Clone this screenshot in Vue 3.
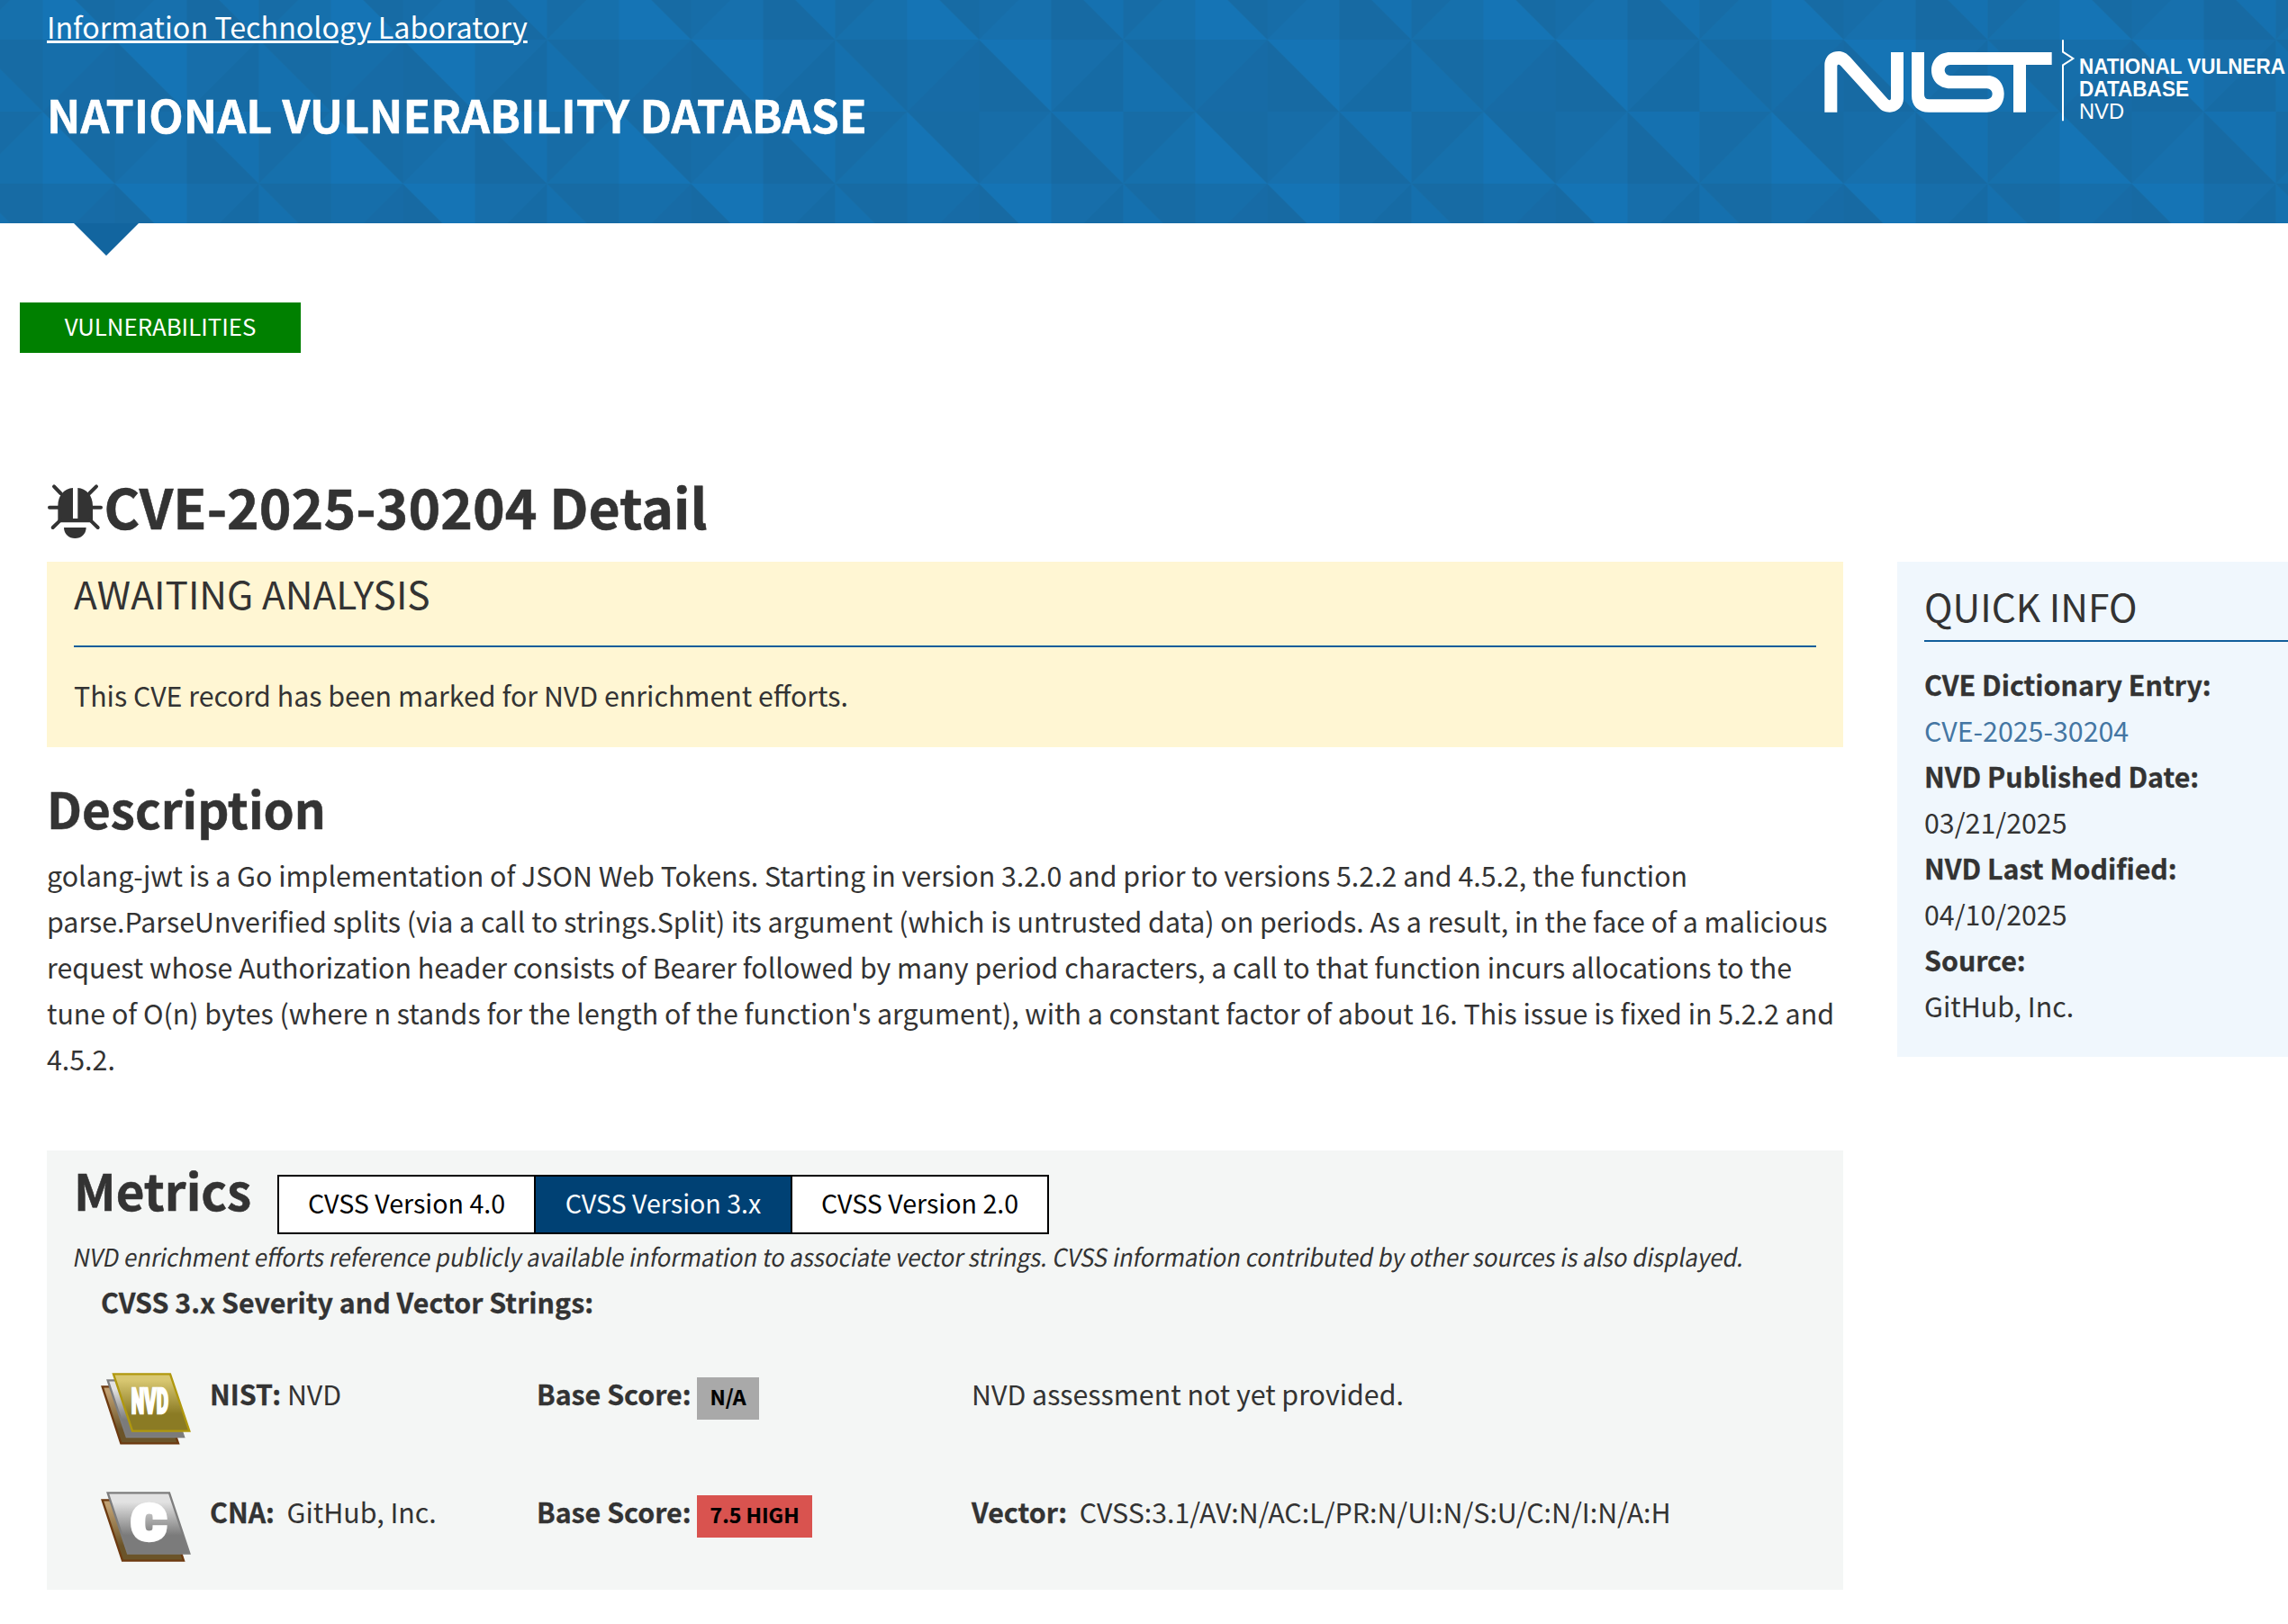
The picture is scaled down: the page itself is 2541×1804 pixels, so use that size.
<script setup>
const facts = [
  { label: 'CVE Dictionary Entry:', value: 'CVE-2025-30204', link: true },
  { label: 'NVD Published Date:', value: '03/21/2025' },
  { label: 'NVD Last Modified:', value: '04/10/2025' },
  { label: 'Source:', value: 'GitHub, Inc.' },
]
const versions = ['CVSS Version 4.0', 'CVSS Version 3.x', 'CVSS Version 2.0']
</script>

<template>
  <div class="page">
    <header class="banner">
      <svg class="facets" width="2541" height="248" aria-hidden="true">
        <defs>
          <pattern id="facet" x="47.5" y="-36" width="320" height="160" patternUnits="userSpaceOnUse">
            <rect width="320" height="160" fill="#176fab" />
            <path d="M0 0V80H80Z" fill="#1574b5" />
            <path d="M0 0H80V80Z" fill="#176ba4" />
            <path d="M80 0H160L80 80Z" fill="#176da8" />
            <path d="M160 0V80H80Z" fill="#1770ad" />
            <path d="M160 0V80H240Z" fill="#176aa3" />
            <path d="M160 0H240V80Z" fill="#1571b0" />
            <path d="M240 0H320L240 80Z" fill="#176ca6" />
            <path d="M320 0V80H240Z" fill="#1670ac" />
            <path d="M0 80H80L0 160Z" fill="#166eaa" />
            <path d="M80 80V160H0Z" fill="#176ba6" />
            <path d="M80 80V160H160Z" fill="#176aa3" />
            <path d="M80 80H160V160Z" fill="#1574b5" />
            <path d="M160 80H240L160 160Z" fill="#176eaa" />
            <path d="M240 80V160H160Z" fill="#166ba5" />
            <path d="M240 80V160H320Z" fill="#1570ae" />
            <path d="M240 80H320V160Z" fill="#176ba4" />
          </pattern>
        </defs>
        <rect width="2541" height="248" fill="url(#facet)" />
      </svg>
      <div class="titles">
        <a class="itl">Information Technology Laboratory</a>
        <div class="site">NATIONAL VULNERABILITY DATABASE</div>
      </div>
      <svg class="nist" viewBox="2020 0 521 248" width="521" height="248">
        <g transform="translate(2020 40) scale(.33333)" fill="#fff">
          <path d="M19 254V97C19 70 38 51 65 51C82 51 93 58 104 70L230 211C236 216 240 213 240 208V54H282V208C282 235 262 254 236 254C219 254 208 248 198 237L72 98C66 93 61 96 61 100V254Z" />
          <path d="M309 54H351V195Q351 211 367 211H560A18 18 0 0 0 560 175H437C400 175 375 148 375 115C375 80 400 54 437 54H776V96H690V254H648V96H437A18 18 0 0 0 437 132H563C596 132 617 160 617 193C617 228 596 254 560 254H367C330 254 309 232 309 197Z" />
          <path d="M813 13V53L847 75L813 97V283" fill="none" stroke="#fff" stroke-width="6" />
        </g>
        <g class="mark">
          <text x="2309" y="82.3" textLength="229" lengthAdjust="spacingAndGlyphs">NATIONAL VULNERA</text>
          <text x="2309" y="107" textLength="122" lengthAdjust="spacingAndGlyphs">DATABASE</text>
          <text class="light" x="2309" y="131.7" textLength="50" lengthAdjust="spacingAndGlyphs">NVD</text>
        </g>
      </svg>
    </header>
    <div class="pointer"></div>
    <a class="section-tag">VULNERABILITIES</a>

    <h2 class="cve">
      <svg class="bug" viewBox="24 0 187.5 228" width="62.5" height="76" fill="#333">
        <path d="M61 150V96C61 60 82 38 111 36V138H127V36C155 38 177 60 177 96V150L166 151H72Z" />
        <path d="M81 168H155C155 190 138 204 118 204S81 190 81 168Z" />
        <path d="M48 31L70 54M189 31L166 54M33 101H64M174 101H204M44 168L70 143M194 168L168 143" stroke="#333" stroke-width="12" stroke-linecap="round" />
      </svg>
      <span>CVE-2025-30204 Detail</span>
    </h2>

    <div class="columns">
      <main class="main">
        <section class="status">
          <h3>AWAITING ANALYSIS</h3>
          <p>This CVE record has been marked for NVD enrichment efforts.</p>
        </section>
        <h3 class="heading">Description</h3>
        <p class="description">golang-jwt is a Go implementation of JSON Web Tokens. Starting in version 3.2.0 and prior to versions 5.2.2 and 4.5.2, the function parse.ParseUnverified splits (via a call to strings.Split) its argument (which is untrusted data) on periods. As a result, in the face of a malicious request whose Authorization header consists of Bearer followed by many period characters, a call to that function incurs allocations to the tune of O(n) bytes (where n stands for the length of the function's argument), with a constant factor of about 16. This issue is fixed in 5.2.2 and 4.5.2.</p>

        <section class="metrics">
          <div class="metrics-head">
            <h3>Metrics</h3>
            <div class="tabs">
              <button v-for="(v, i) in versions" :key="v" :class="{ on: i === 1 }">{{ v }}</button>
            </div>
          </div>
          <p class="note"><span>NVD enrichment efforts reference publicly available information to associate vector strings. CVSS information contributed by other sources is also displayed.</span></p>
          <p class="sub">CVSS 3.x Severity and Vector Strings:</p>

          <div class="row">
            <div class="icon">
              <svg viewBox="66 75 300 240" width="100" height="80">
                <defs>
                  <linearGradient id="gold" x1="0" y1="0" x2="0" y2="1"><stop offset=".1" stop-color="#d9c872" /><stop offset=".7" stop-color="#8b7b24" /></linearGradient>
                  <linearGradient id="silver" x1="0" y1="0" x2="0" y2="1"><stop offset=".15" stop-color="#e2e2e2" /><stop offset=".7" stop-color="#7b7b7b" /></linearGradient>
                  <linearGradient id="bronze" x1="0" y1="0" x2="0" y2="1"><stop offset=".1" stop-color="#c0a071" /><stop offset=".75" stop-color="#6b5429" /></linearGradient>
                </defs>
                <path d="M71 121H259L324 310H133Z" fill="url(#bronze)" stroke="#6d3a10" stroke-width="7" />
                <path d="M89 100H279L342 288H152Z" fill="url(#silver)" stroke="#7d7d7d" stroke-width="7" />
                <path d="M108 79H297L361 269H171Z" fill="url(#gold)" stroke="#b0980e" stroke-width="7" />
                <text class="glyph" x="167" y="210" font-size="114" stroke-width="7" textLength="124" lengthAdjust="spacingAndGlyphs">NVD</text>
              </svg>
            </div>
            <div class="source"><b>NIST:</b> NVD</div>
            <div class="score"><b>Base Score:</b><span class="badge na">N/A</span></div>
            <div>NVD assessment not yet provided.</div>
          </div>

          <div class="row">
            <div class="icon">
              <svg viewBox="66 471 300 234" width="100" height="78">
                <path d="M71 499H275L342 701H138Z" fill="url(#bronze)" stroke="#6d3a10" stroke-width="7" />
                <path d="M89 475H294L361 677H156Z" fill="url(#silver)" stroke="#7d7d7d" stroke-width="7" />
                <text class="glyph" x="169" y="631" font-size="159" stroke-width="17" textLength="113" lengthAdjust="spacingAndGlyphs">C</text>
              </svg>
            </div>
            <div class="source"><b>CNA:</b>&nbsp; GitHub, Inc.</div>
            <div class="score"><b>Base Score:</b><span class="badge high">7.5 HIGH</span></div>
            <div><b>Vector:</b>&nbsp; CVSS:3.1/AV:N/AC:L/PR:N/UI:N/S:U/C:N/I:N/A:H</div>
          </div>
        </section>
      </main>

      <aside class="quick">
        <h3>QUICK INFO</h3>
        <dl>
          <template v-for="f in facts" :key="f.label">
            <dt>{{ f.label }}</dt>
            <dd :class="{ link: f.link }">{{ f.value }}</dd>
          </template>
        </dl>
      </aside>
    </div>
  </div>
</template>

<style>
body { background: #fff; overflow: hidden; }
</style>

<style scoped>
.page {
  width: 2541px;
  height: 1804px;
  overflow: hidden;
  font-family: "Noto Sans CJK SC", "Noto Sans", sans-serif;
  font-size: 30.35px;
  line-height: 51px;
  color: #333;
}
h2, h3, p, dl, dd { margin: 0; }
b, dt { font-weight: 700; }
svg { display: block; flex: none; overflow: visible; }
.site, .cve, .heading, .metrics-head h3, .sub, b, dt, .badge { -webkit-text-stroke: .01em; }

.banner {
  position: relative;
  display: flex;
  height: 248px;
  padding-left: 52px;
  box-sizing: border-box;
  overflow: hidden;
  color: #fff;
}
.facets { position: absolute; left: 0; top: 0; }
.titles { position: relative; width: 1968px; flex: none; padding-top: 5px; }
.itl {
  display: block;
  font-size: 32.25px;
  line-height: 48px;
  text-decoration: underline;
  text-decoration-thickness: 3px;
  text-underline-offset: 2px;
}
.site { margin-top: 33px; font-size: 49.98px; line-height: 80px; font-weight: 700; }
.nist { position: relative; }
.mark { font: 700 23.6px "Liberation Sans", Arial, sans-serif; fill: #fff; }
.light { font-weight: 400; }

.pointer {
  width: 0;
  margin-left: 82px;
  border: 36px solid transparent;
  border-top-color: #12659f;
  border-bottom: 0;
}
.section-tag {
  display: block;
  width: 312px;
  height: 56px;
  margin: 52px 0 0 22px;
  background: #008000;
  color: #fff;
  font-size: 25.8px;
  line-height: 52px;
  text-align: center;
}

.cve {
  display: flex;
  height: 76px;
  margin: 138px 0 18px 52px;
  font-size: 60.65px;
  line-height: 64px;
  font-weight: 700;
}
.bug { margin-right: 1px; }

.columns { display: flex; gap: 60px; padding-left: 52px; }
.main { width: 1995px; flex: none; }
.status { height: 206px; padding: 0 30px; background: #fff6d3; }
.status h3 {
  height: 93px;
  font-size: 42.5px;
  line-height: 69px;
  font-weight: 400;
  border-bottom: 2px solid #115e9b;
}
.status p { padding-top: 28px; }
.heading { margin-top: 37px; font-size: 54.7px; line-height: 62px; font-weight: 700; }
.description { margin-top: 18px; }

.metrics { height: 488px; margin-top: 76px; padding: 0 30px; background: #f4f6f5; }
.metrics-head { display: flex; height: 93px; }
.metrics-head h3 { width: 226px; font-size: 54.7px; line-height: 88px; font-weight: 700; }
.tabs { display: flex; margin-top: 27px; }
.tabs button {
  width: 287px;
  height: 66px;
  padding: 0 0 5px;
  border: 2px solid #000;
  background: #fff;
  color: #000;
  font: 400 28.6px/57px "Noto Sans CJK SC", sans-serif;
}
.tabs button + button { margin-left: -2px; }
.tabs .on { background: #004174; color: #fff; }
.note { height: 50px; margin-left: -2px; font-size: 27.4px; line-height: 48px; white-space: nowrap; }
.note span {
  display: inline-block;
  transform: scaleX(.9375) skewX(-11deg);
  transform-origin: 0 36px;
}
.sub { padding-left: 30px; font-weight: 700; line-height: 51px; }
.row { display: flex; height: 131px; padding-left: 30px; white-space: nowrap; }
.sub + .row { margin-top: 50px; }
.row > div { padding-top: 1px; box-sizing: border-box; }
.row .icon { width: 121px; padding-top: 3px; }
.row + .row .icon { padding-top: 4px; }
.source { width: 363px; }
.score { display: flex; width: 483px; }
.score b { width: 178px; }
.badge {
  height: 47px;
  margin-top: 7px;
  padding: 0 14.5px;
  color: #000;
  font-size: 23.1px;
  line-height: 42px;
  font-weight: 700;
}
.na { background: #a9a9a9; }
.high { background: #d9534f; }
.glyph { font-family: Roboto, sans-serif; font-weight: 900; fill: #fff; stroke: #fff; }

.quick { flex: 1; height: 550px; padding-left: 30px; background: #f0f7fd; }
.quick h3 {
  padding: 20px 0 10px;
  font-size: 42.5px;
  line-height: 57px;
  font-weight: 400;
  border-bottom: 2px solid #115e9b;
}
.quick dl { padding-top: 22px; }
.link { color: #4476a3; }
</style>
